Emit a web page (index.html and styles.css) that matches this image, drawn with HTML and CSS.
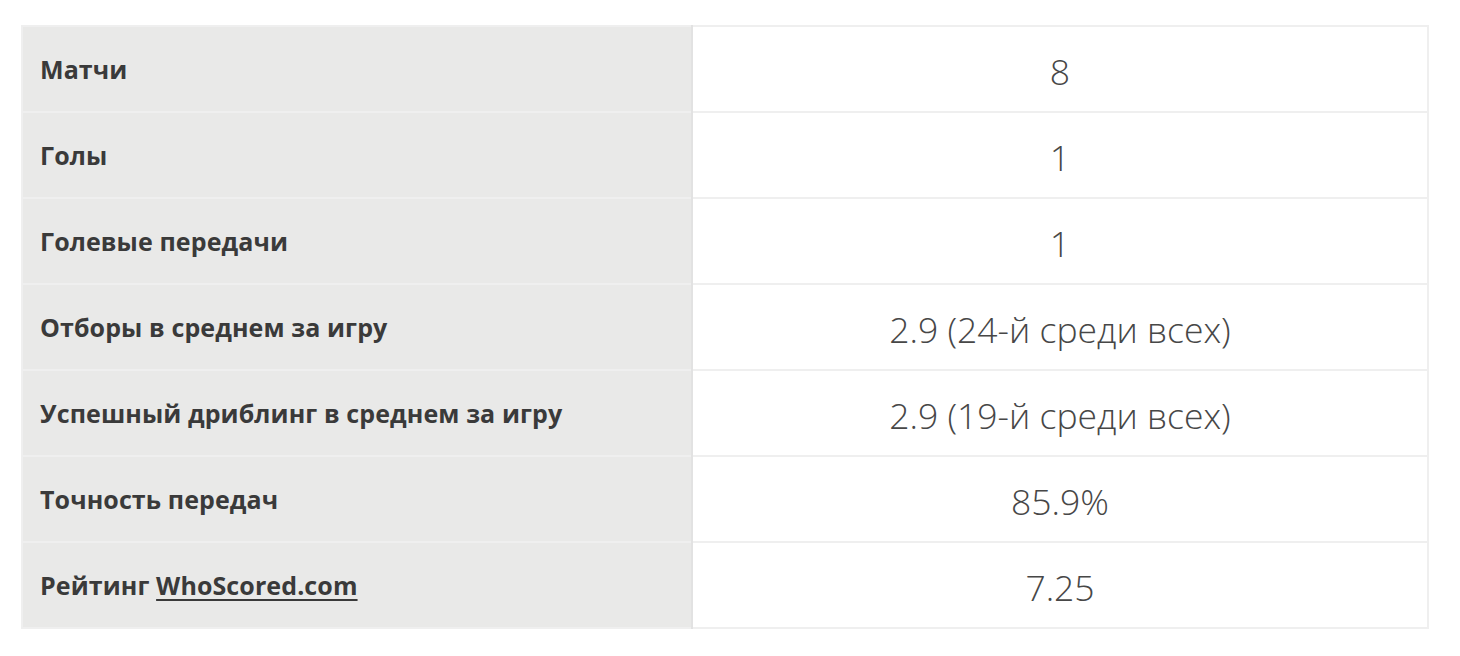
FILE: index.html
```html
<!DOCTYPE html>
<html lang="ru">
<head>
<meta charset="utf-8">
<link rel="stylesheet" href="styles.css">
</head>
<body>
<div class="page">
  <table class="stats">
    <tr><th>Матчи</th><td>8</td></tr>
    <tr><th>Голы</th><td>1</td></tr>
    <tr><th>Голевые передачи</th><td>1</td></tr>
    <tr><th>Отборы в среднем за игру</th><td>2.9 (24-й среди всех)</td></tr>
    <tr><th>Успешный дриблинг в среднем за игру</th><td>2.9 (19-й среди всех)</td></tr>
    <tr><th>Точность передач</th><td>85.9%</td></tr>
    <tr><th>Рейтинг <a href="#">WhoScored.com</a></th><td>7.25</td></tr>
  </table>
</div>
</body>
</html>
```

FILE: styles.css
```css
html, body {
  margin: 0;
  padding: 0;
  background: #ffffff;
}
.page {
  padding: 25px 0 0 21px;
}
.stats {
  border-collapse: collapse;
  width: 1408px;
  border: 2px solid #efefef;
}
.stats tr {
  height: 86px;
}
.stats th,
.stats td {
  border-top: 2px solid #efefef;
  padding: 0;
  vertical-align: middle;
}
.stats th {
  width: 651px;
  background: #e9e9e8;
  border-right: 2px solid #e2e2e2;
  text-align: left;
  padding-left: 17px;
  font-family: "Open Sans", sans-serif;
  font-weight: 700;
  font-size: 25px;
  letter-spacing: 0.1px;
  color: #3a3a3a;
}
.stats th a {
  color: #3a3a3a;
  text-decoration: underline;
  text-decoration-thickness: 2px;
  text-underline-offset: 4px;
}
.stats td {
  text-align: center;
  font-family: "Open Sans", sans-serif;
  font-weight: 300;
  font-size: 35.5px;
  color: #474747;
  padding-top: 3px;
}
```
